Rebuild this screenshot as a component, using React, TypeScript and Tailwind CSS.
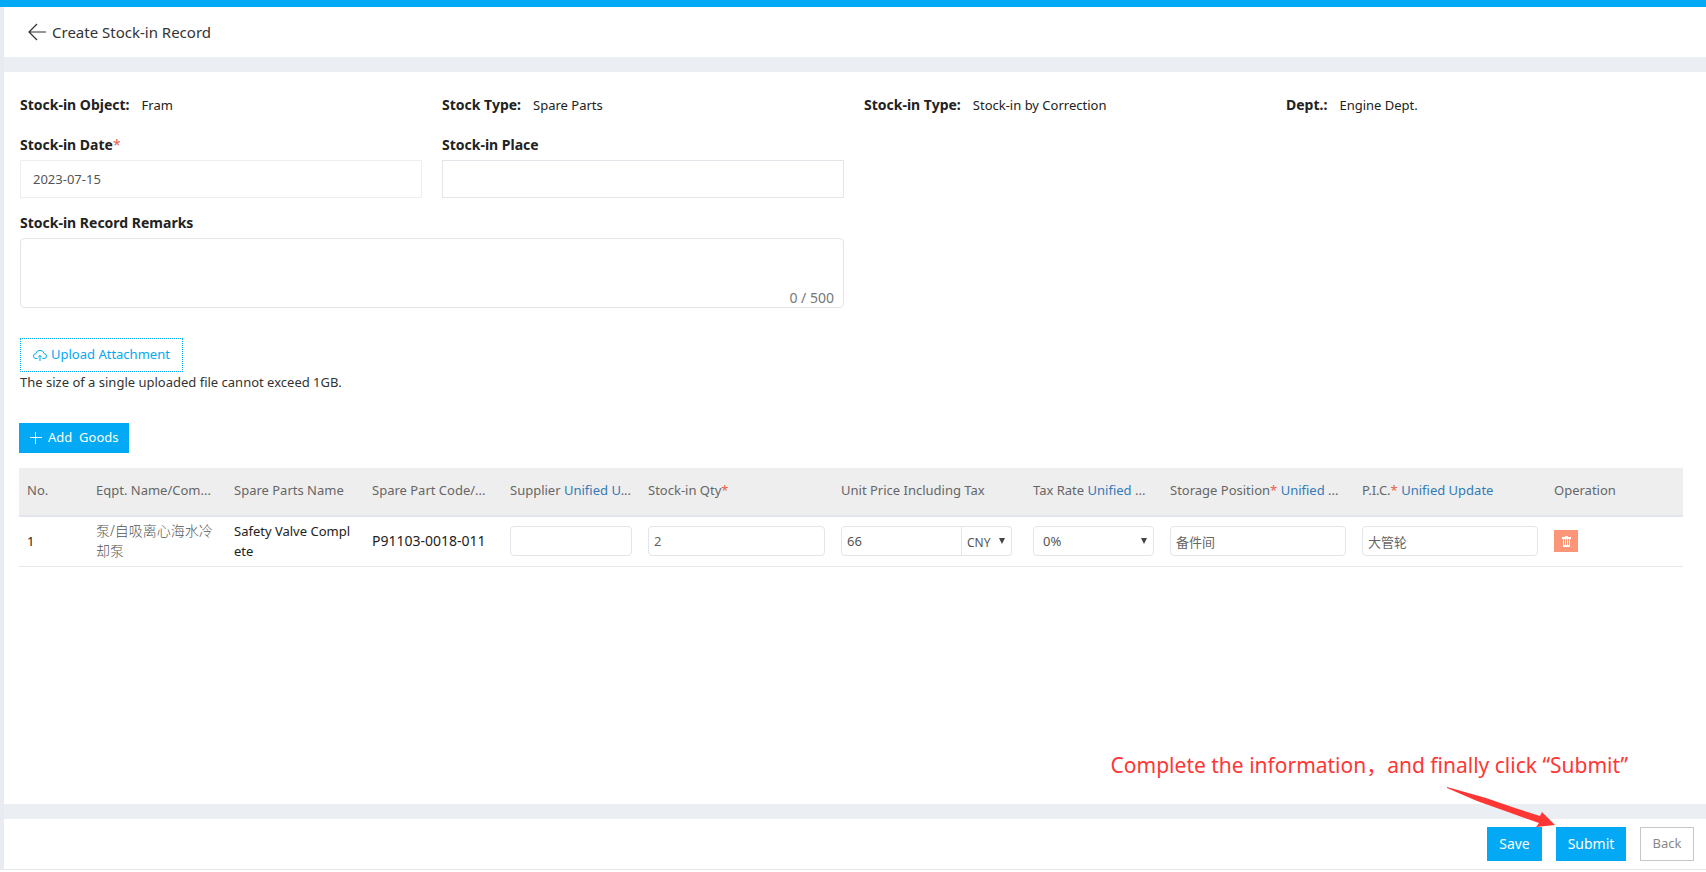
import { useState } from "react";

interface IChildren {
  children: React.ReactNode;
}

const Info = ({ label, children }: { label: string } & IChildren) => {
  return (
    <div className="flex gap-3">
      <dt className="text-sm font-bold leading-5">{label}:</dt>
      <dd className="leading-5">{children}</dd>
    </div>
  );
};

const Label = ({ htmlFor, children }: { htmlFor: string } & IChildren) => {
  return (
    <label htmlFor={htmlFor} className="block text-sm font-bold leading-5">
      {children}
    </label>
  );
};

const Required = () => <span className="font-normal text-[#e8604c]">*</span>;

const UnifiedLink = ({ children }: IChildren) => (
  <a href="#" title="Unified Update" className="text-[#337ab7]">
    {children}
  </a>
);

const TH = ({ children }: IChildren) => {
  return (
    <th scope="col" className="truncate px-2 pt-3 pb-[15px] text-left font-normal leading-5">
      {children}
    </th>
  );
};

const TD = ({ children }: IChildren) => {
  return <td className="break-all px-2 py-1 leading-5">{children}</td>;
};

const CellInput = ({ label, value }: { label: string; value: string }) => {
  return (
    <input
      aria-label={label}
      defaultValue={value}
      className="block h-[30px] w-full rounded border border-[#e2e5e9] px-[5px] text-[#666]"
    />
  );
};

const Caret = ({ className }: { className: string }) => (
  <svg
    viewBox="0 0 6 6"
    className={`pointer-events-none absolute size-[6px] fill-[#444] ${className}`}
    aria-hidden="true"
  >
    <path d="M0 0h6L3 6z" />
  </svg>
);

const BackIcon = () => (
  <svg viewBox="0 0 18 18" className="size-[18px]" fill="none" stroke="#333" strokeWidth="1.2" aria-hidden="true">
    <path d="M9 1 1 9l8 8M1 9h17" />
  </svg>
);

const CloudIcon = () => (
  <svg viewBox="0 0 14 12" className="h-3 w-[14px]" fill="none" stroke="currentColor" aria-hidden="true">
    <path d="M4.500 9.500H3A2.400 2.400 0 0 1 2.800 4.700 4.300 4.300 0 0 1 11.200 4.700a2.400 2.400 0 0 1-.2 4.800H9.500" />
    <path d="M7 12V6.500M5.200 8.200 7 6.400l1.800 1.800" />
  </svg>
);

const PlusIcon = () => (
  <svg viewBox="0 0 12 12" className="size-3" fill="none" stroke="currentColor" aria-hidden="true">
    <path d="M5.500 0v12M0 5.500h12" />
  </svg>
);

const TrashIcon = () => (
  <svg viewBox="0 0 9 11" className="h-[11px] w-[9px] fill-current" aria-hidden="true">
    <path fillRule="evenodd" d="M3 0h3v1h3v2H8v8H1V3H0V1h3zM2 3v6h1V3zM4 3v6h1V3zM6 3v6h1V3z" />
  </svg>
);

const Goods = () => {
  return (
    <table className="mt-[15px] w-full table-fixed border-collapse">
      <colgroup>
        <col className="w-[69px]" />
        <col className="w-[138px]" />
        <col className="w-[138px]" />
        <col className="w-[138px]" />
        <col className="w-[138px]" />
        <col className="w-[193px]" />
        <col className="w-[192px]" />
        <col className="w-[137px]" />
        <col className="w-[192px]" />
        <col className="w-[192px]" />
        <col className="w-[137px]" />
      </colgroup>
      <thead>
        <tr className="border-b-2 border-[#e2e5ea] bg-[#eee] text-[#666]">
          <TH>No.</TH>
          <TH>Eqpt. Name/Com...</TH>
          <TH>Spare Parts Name</TH>
          <TH>Spare Part Code/...</TH>
          <TH>
            Supplier <UnifiedLink>Unified U</UnifiedLink>...
          </TH>
          <TH>
            Stock-in Qty
            <Required />
          </TH>
          <TH>Unit Price Including Tax</TH>
          <TH>
            Tax Rate <UnifiedLink>Unified</UnifiedLink> ...
          </TH>
          <TH>
            Storage Position
            <Required /> <UnifiedLink>Unified</UnifiedLink> ...
          </TH>
          <TH>
            P.I.C.
            <Required /> <UnifiedLink>Unified Update</UnifiedLink>
          </TH>
          <TH>Operation</TH>
        </tr>
      </thead>
      <tbody>
        <tr className="h-[50px] border-b border-[#e8eaec] text-[#222]">
          <TD>1</TD>
          <TD>
            <span className="text-sm font-light leading-5 text-[#555]">泵/自吸离心海水冷却泵</span>
          </TD>
          <TD>Safety Valve Complete</TD>
          <TD>
            <span className="text-sm leading-5">P91103-0018-011</span>
          </TD>
          <TD>
            <CellInput label="Supplier" value="" />
          </TD>
          <TD>
            <CellInput label="Stock-in Qty" value="2" />
          </TD>
          <TD>
            <div className="mr-[5px] flex h-[30px] text-[#555]">
              <input
                aria-label="Unit Price Including Tax"
                defaultValue="66"
                className="min-w-0 flex-1 rounded-l border border-[#e2e5e9] px-[5px]"
              />
              <div className="relative w-[50px]">
                <select
                  aria-label="Currency"
                  className="size-full appearance-none rounded-r border border-l-0 border-[#e2e5e9] pt-1 pl-[5px] text-xs"
                >
                  <option>CNY</option>
                </select>
                <Caret className="top-3 right-[7px]" />
              </div>
            </div>
          </TD>
          <TD>
            <div className="relative h-[30px] text-[#555]">
              <select
                aria-label="Tax Rate"
                className="size-full appearance-none rounded border border-[#e2e5e9] pl-[9px]"
              >
                <option>0%</option>
              </select>
              <Caret className="top-3 right-[7px]" />
            </div>
          </TD>
          <TD>
            <CellInput label="Storage Position" value="备件间" />
          </TD>
          <TD>
            <CellInput label="P.I.C." value="大管轮" />
          </TD>
          <TD>
            <button
              type="button"
              aria-label="Delete"
              className="flex h-[22px] w-6 items-center justify-center bg-[#fd9578] text-white"
            >
              <TrashIcon />
            </button>
          </TD>
        </tr>
      </tbody>
    </table>
  );
};

const App: React.FunctionComponent = () => {
  const [remarks, setRemarks] = useState("");

  return (
    <div className="flex min-h-screen flex-col border-t-[7px] border-[#03a9f4] bg-white pb-[2px] font-['Noto_Sans','Noto_Sans_CJK_SC',sans-serif] text-[13px] text-[#333]">
      <div className="flex flex-1 flex-col border-l-4 border-[#e8ebf2]">
        <header className="flex h-[50px] items-center pl-6">
          <a href="#" className="flex items-center gap-[6px] text-[15px]">
            <BackIcon />
            <h1>Create Stock-in Record</h1>
          </a>
        </header>

        <main className="flex-1 border-y-[15px] border-[#ebeef3] pt-[23px] pr-[18px] pl-4">
          <dl className="grid grid-cols-4 gap-5 text-[#222]">
            <Info label="Stock-in Object">Fram</Info>
            <Info label="Stock Type">Spare Parts</Info>
            <Info label="Stock-in Type">Stock-in by Correction</Info>
            <Info label="Dept.">Engine Dept.</Info>
          </dl>

          <div className="mt-5 grid grid-cols-4 gap-x-5 gap-y-[15px] text-[#222]">
            <div>
              <Label htmlFor="date">
                Stock-in Date
                <Required />
              </Label>
              <input
                id="date"
                defaultValue="2023-07-15"
                className="mt-[5px] block h-[38px] w-full border border-[#eee] px-3 text-[#555]"
              />
            </div>
            <div>
              <Label htmlFor="place">Stock-in Place</Label>
              <input id="place" className="mt-[5px] block h-[38px] w-full border border-[#e2e5e9] px-3" />
            </div>
            <div className="relative col-span-2 col-start-1">
              <Label htmlFor="remarks">Stock-in Record Remarks</Label>
              <textarea
                id="remarks"
                maxLength={500}
                value={remarks}
                onChange={(e) => setRemarks(e.target.value)}
                className="mt-[5px] block h-[70px] w-full resize-none rounded border border-[#e2e5e9] px-3 py-2"
              />
              <span className="absolute right-[10px] bottom-0 text-sm leading-5 text-[#777]">
                {remarks.length} / 500
              </span>
            </div>
          </div>

          <button
            type="button"
            className="mt-[30px] flex h-[34px] items-center gap-1 border border-dotted border-[#03a9f4] px-3 text-[#03a9f4]"
          >
            <CloudIcon />
            Upload Attachment
          </button>
          <p className="leading-5">The size of a single uploaded file cannot exceed 1GB.</p>

          <div className="-ml-px mr-[5px] pt-[31px]">
            <button
              type="button"
              className="flex h-[30px] items-center gap-[6px] bg-[#03a9f4] px-[11px] text-white"
            >
              <PlusIcon />
              <span className="whitespace-pre">Add  Goods</span>
            </button>
            <Goods />
          </div>
        </main>

        <footer className="relative flex h-[51px] items-center justify-end gap-[14px] border-b border-[#e2e5e9] pr-3">
          <button type="button" className="h-[34px] w-[55px] bg-[#03a9f4] text-sm text-white">
            Save
          </button>
          <button type="button" className="h-[34px] w-[70px] bg-[#03a9f4] text-sm text-white">
            Submit
          </button>
          <button type="button" className="h-[34px] w-[54px] border border-[#c5c7cc] text-[#888]">
            Back
          </button>

          <div className="pointer-events-none absolute right-[78px] bottom-[42px] flex flex-col text-[#fe3735]">
            <p className="whitespace-pre text-[21px] leading-7">
              Complete the information，and finally click “Submit”
            </p>
            <svg viewBox="0 0 108 40" className="mt-2 mr-[73px] h-10 w-[108px] self-end fill-current" aria-hidden="true">
              <path d="M0 0 39 11 68 21 93 29 95 25 108 38 89 40 92 36 61 25 30 14 0 1z" />
            </svg>
          </div>
        </footer>
      </div>
    </div>
  );
};

export default App;
